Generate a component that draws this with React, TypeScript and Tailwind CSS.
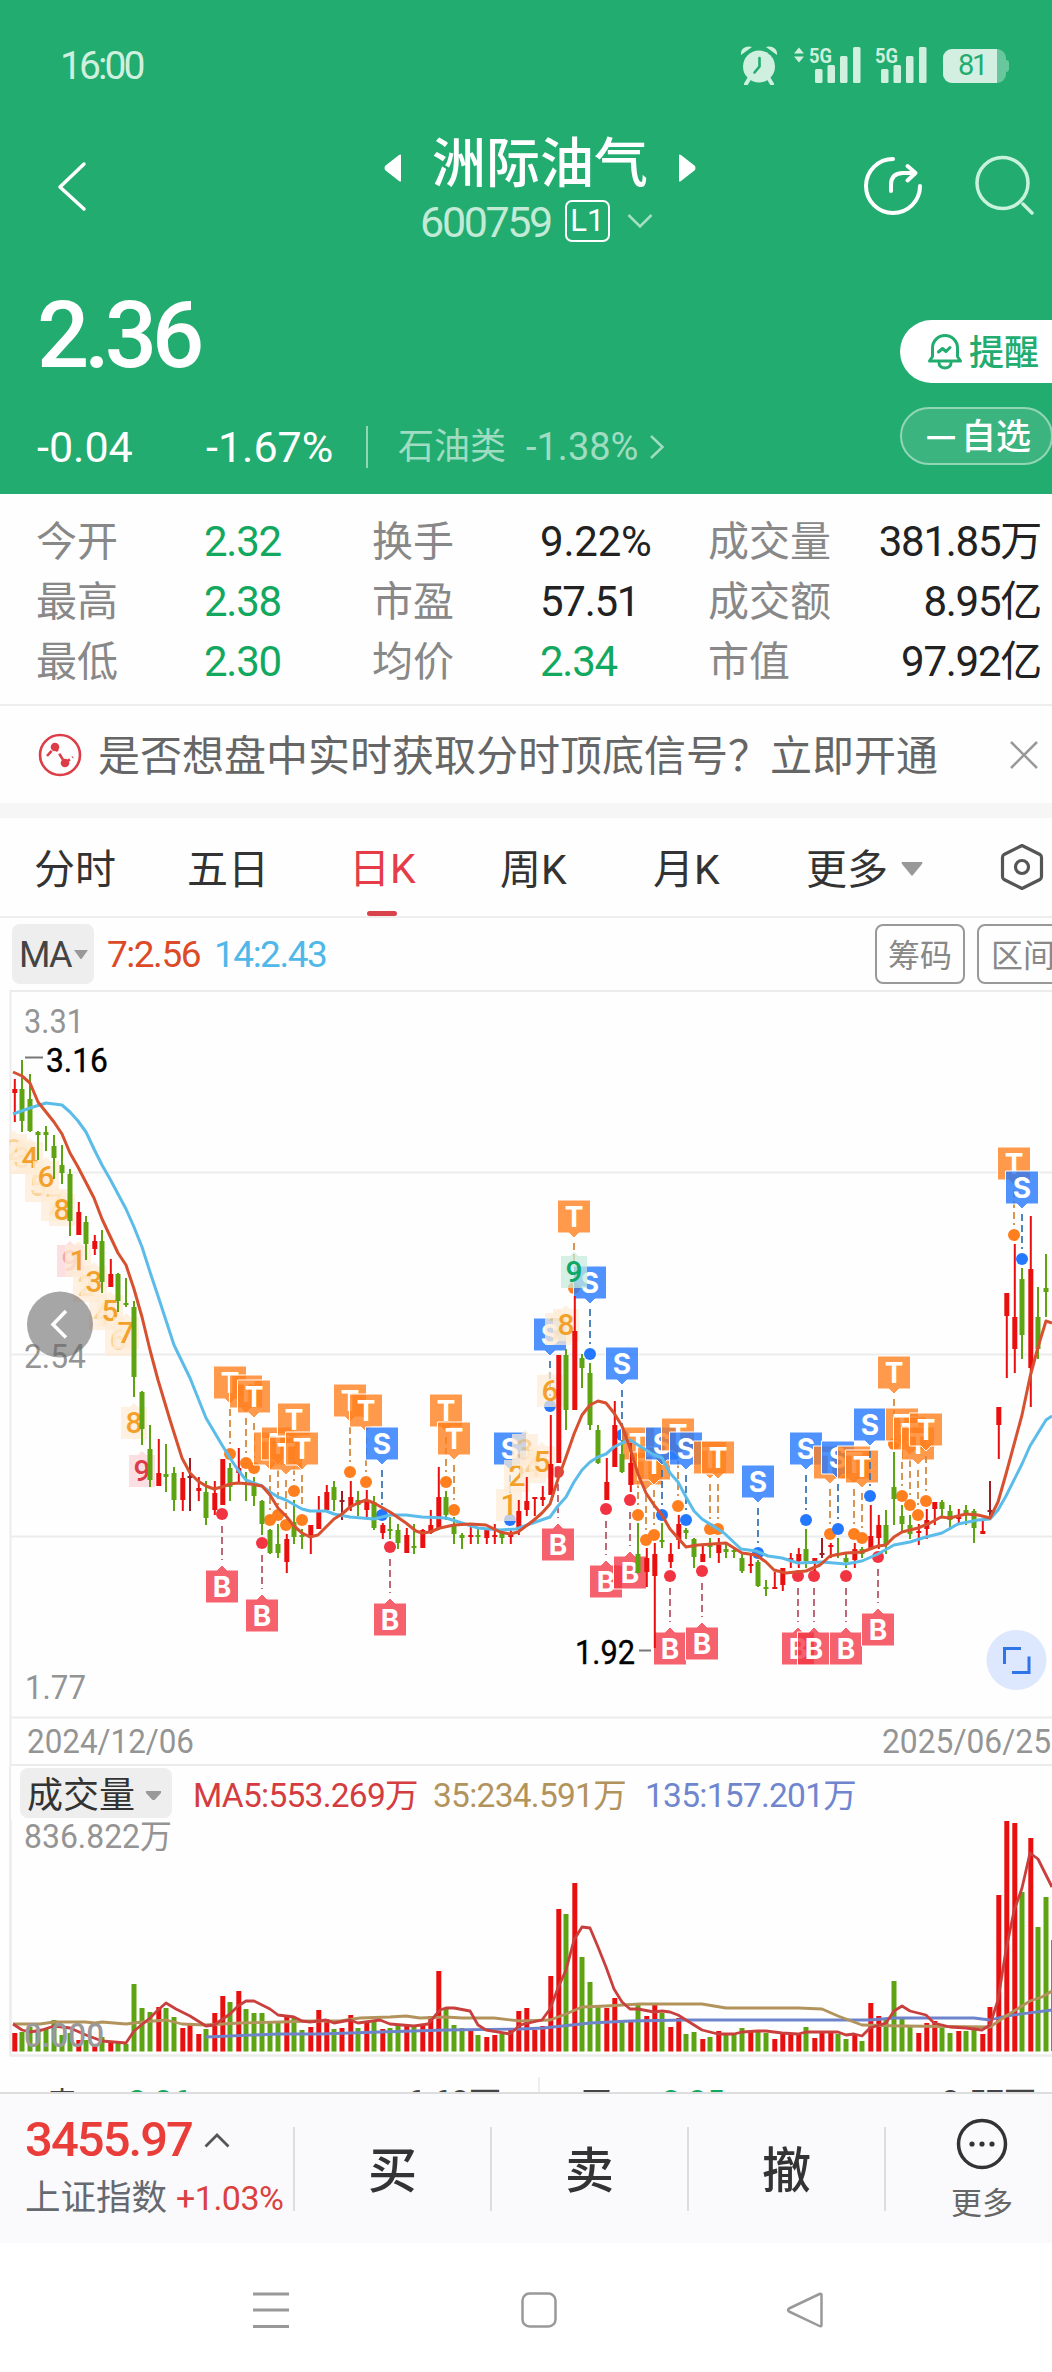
import { clsx } from 'clsx';

type Kind = 'R' | 'G' | 'D';
// kind, high, low, body top, body bottom, volume top
type Candle = [Kind, number, number, number, number, number];

const CANDLES: Candle[] = [
  ['R', 1079, 1122, 1089, 1093, 2033], ['G', 1060, 1132, 1089, 1121, 2032], ['G', 1074, 1132, 1099, 1131, 2027],
  ['G', 1131, 1160, 1132, 1135, 2030], ['G', 1126, 1151, 1132, 1135, 2028], ['G', 1135, 1179, 1146, 1158, 2020],
  ['G', 1145, 1184, 1165, 1173, 2035], ['G', 1169, 1236, 1174, 1221, 2033], ['R', 1202, 1235, 1212, 1235, 2040],
  ['G', 1216, 1260, 1222, 1244, 2040], ['R', 1235, 1255, 1241, 1249, 2045], ['G', 1230, 1293, 1241, 1282, 2037],
  ['R', 1259, 1287, 1274, 1287, 2043], ['G', 1273, 1312, 1274, 1301, 2043], ['G', 1278, 1307, 1303, 1305, 2044],
  ['G', 1301, 1397, 1307, 1377, 1984], ['G', 1391, 1445, 1392, 1429, 2008], ['G', 1425, 1487, 1449, 1480, 2012],
  ['R', 1439, 1486, 1473, 1486, 2007], ['G', 1444, 1492, 1474, 1477, 2008], ['G', 1467, 1511, 1473, 1500, 2017],
  ['R', 1472, 1511, 1478, 1500, 2028], ['D', 1458, 1511, 1476, 1478, 2024], ['R', 1477, 1501, 1488, 1491, 2034],
  ['G', 1481, 1525, 1492, 1518, 2029], ['R', 1481, 1515, 1493, 1510, 2013], ['R', 1459, 1505, 1459, 1505, 1996],
  ['G', 1463, 1501, 1468, 1487, 2002], ['R', 1448, 1482, 1468, 1473, 1991], ['G', 1472, 1501, 1483, 1485, 2009],
  ['G', 1477, 1506, 1486, 1496, 2013], ['G', 1500, 1535, 1501, 1524, 2013], ['G', 1529, 1554, 1530, 1553, 2022],
  ['G', 1524, 1558, 1544, 1553, 2021], ['R', 1534, 1573, 1539, 1562, 2016], ['G', 1500, 1544, 1522, 1537, 2018],
  ['G', 1529, 1549, 1535, 1537, 2030], ['R', 1525, 1554, 1525, 1535, 2027], ['R', 1496, 1529, 1512, 1529, 2010],
  ['R', 1485, 1510, 1492, 1510, 2019], ['G', 1481, 1511, 1487, 1500, 2029], ['D', 1491, 1520, 1500, 1502, 2028],
  ['R', 1481, 1511, 1497, 1507, 2015], ['G', 1491, 1516, 1500, 1505, 2028], ['R', 1490, 1517, 1500, 1510, 2022],
  ['G', 1496, 1530, 1502, 1528, 2021], ['R', 1523, 1539, 1525, 1533, 2029], ['G', 1517, 1539, 1529, 1530, 2028],
  ['G', 1524, 1549, 1530, 1543, 2025], ['R', 1528, 1553, 1535, 1553, 2025], ['G', 1524, 1554, 1546, 1548, 2027],
  ['R', 1529, 1548, 1530, 1548, 2024], ['R', 1510, 1534, 1525, 1533, 2016], ['R', 1467, 1528, 1497, 1528, 1971],
  ['G', 1491, 1520, 1497, 1515, 2008], ['G', 1517, 1544, 1524, 1534, 2025], ['G', 1533, 1549, 1535, 1538, 2028],
  ['R', 1524, 1544, 1535, 1537, 2031], ['G', 1528, 1544, 1535, 1537, 2035], ['R', 1528, 1544, 1530, 1538, 2037],
  ['R', 1524, 1544, 1535, 1537, 2035], ['G', 1530, 1544, 1533, 1538, 2034], ['R', 1530, 1544, 1535, 1537, 2030],
  ['R', 1500, 1535, 1511, 1528, 2011], ['R', 1477, 1516, 1501, 1510, 2008], ['R', 1497, 1516, 1497, 1499, 2030],
  ['R', 1486, 1506, 1497, 1500, 2026], ['R', 1415, 1495, 1464, 1495, 1976], ['R', 1355, 1463, 1355, 1463, 1909],
  ['G', 1349, 1430, 1355, 1410, 1914], ['R', 1296, 1410, 1331, 1410, 1883], ['G', 1354, 1388, 1358, 1368, 1957],
  ['G', 1363, 1430, 1373, 1425, 1982], ['G', 1425, 1464, 1430, 1463, 2005], ['R', 1458, 1500, 1482, 1500, 2008],
  ['R', 1401, 1467, 1425, 1467, 1998], ['G', 1440, 1473, 1454, 1472, 2022], ['R', 1443, 1492, 1463, 1485, 2022],
  ['G', 1523, 1573, 1554, 1573, 2003], ['R', 1548, 1587, 1558, 1572, 2016], ['R', 1543, 1648, 1554, 1576, 2005],
  ['G', 1523, 1548, 1540, 1542, 2013], ['R', 1543, 1568, 1554, 1562, 2027], ['R', 1515, 1549, 1524, 1540, 2018],
  ['G', 1528, 1539, 1530, 1533, 2034], ['G', 1538, 1568, 1539, 1557, 2032], ['R', 1544, 1562, 1554, 1562, 2039],
  ['G', 1538, 1558, 1544, 1547, 2037], ['R', 1538, 1563, 1545, 1553, 2031], ['G', 1543, 1558, 1549, 1552, 2034],
  ['G', 1547, 1558, 1550, 1552, 2034], ['G', 1554, 1573, 1558, 1571, 2028], ['R', 1554, 1573, 1564, 1566, 2032],
  ['G', 1560, 1587, 1562, 1586, 2030], ['G', 1580, 1596, 1587, 1589, 2033], ['R', 1572, 1589, 1587, 1589, 2039],
  ['R', 1568, 1591, 1568, 1585, 2034], ['R', 1553, 1568, 1558, 1559, 2033], ['R', 1548, 1568, 1554, 1561, 2034],
  ['G', 1529, 1568, 1549, 1561, 2027], ['R', 1558, 1571, 1558, 1562, 2038], ['D', 1538, 1558, 1553, 1555, 2033],
  ['R', 1543, 1558, 1545, 1547, 2033], ['G', 1538, 1558, 1553, 1555, 2034], ['G', 1553, 1568, 1558, 1562, 2039],
  ['R', 1543, 1568, 1549, 1560, 2034], ['G', 1547, 1558, 1549, 1554, 2041], ['R', 1505, 1549, 1536, 1549, 2003],
  ['R', 1515, 1549, 1525, 1538, 2016], ['G', 1510, 1554, 1525, 1545, 2018], ['G', 1452, 1525, 1487, 1499, 1981],
  ['G', 1505, 1531, 1516, 1524, 2019], ['G', 1515, 1539, 1525, 1534, 2026], ['R', 1524, 1545, 1531, 1533, 2033],
  ['R', 1509, 1539, 1520, 1529, 2023], ['R', 1502, 1525, 1502, 1509, 2021], ['G', 1500, 1516, 1502, 1509, 2028],
  ['G', 1505, 1530, 1511, 1520, 2033], ['R', 1509, 1525, 1517, 1519, 2031], ['G', 1505, 1525, 1510, 1515, 2031],
  ['G', 1509, 1543, 1511, 1528, 2027], ['R', 1521, 1534, 1531, 1534, 2034], ['D', 1481, 1520, 1510, 1512, 2007],
  ['R', 1407, 1459, 1407, 1425, 1895], ['R', 1293, 1378, 1293, 1316, 1821], ['R', 1244, 1373, 1317, 1349, 1823],
  ['G', 1268, 1359, 1279, 1335, 1892], ['R', 1216, 1407, 1269, 1368, 1838], ['G', 1287, 1359, 1317, 1349, 1927],
  ['G', 1254, 1317, 1288, 1292, 1897],
];

const MA7 =
  '13,1072 22,1076 30,1083 38,1102 54,1122 62,1134 70,1153 78,1167 94,1198 102,1219 118,1253 126,1265 134,1289 142,1317 150,1350 158,1380 170,1420 182,1458 190,1473 198,1481 206,1486 214,1489 222,1487 230,1484 238,1483 250,1484 262,1486 270,1495 278,1508 286,1516 294,1526 302,1533 310,1537 318,1535 326,1527 334,1519 342,1514 350,1507 358,1503 366,1500 374,1503 390,1512 406,1523 416,1531 422,1533 430,1532 440,1528 454,1525 470,1524 486,1525 500,1532 510,1534 518,1532 526,1526 534,1520 542,1513 550,1504 558,1479 566,1457 574,1434 582,1415 590,1405 598,1401 606,1403 614,1413 622,1426 630,1448 638,1474 646,1493 654,1505 662,1515 670,1529 678,1538 686,1547 698,1545 726,1543 742,1553 756,1555 766,1562 774,1570 786,1573 806,1571 820,1565 830,1556 846,1553 862,1552 878,1546 886,1545 894,1537 902,1532 918,1528 930,1523 941,1517 950,1518 958,1516 966,1514 978,1515 990,1518 998,1502 1006,1474 1022,1415 1030,1377 1038,1347 1046,1321 1052,1323';
const MA14 =
  '13,1114 30,1108 46,1103 62,1105 70,1112 78,1121 86,1132 94,1149 102,1165 110,1179 118,1194 126,1209 134,1227 142,1247 150,1272 158,1296 174,1345 190,1378 206,1418 222,1445 230,1458 238,1470 246,1480 262,1486 270,1492 278,1497 286,1500 302,1509 310,1511 326,1511 334,1514 350,1517 374,1519 390,1515 406,1515 422,1517 446,1518 462,1523 478,1528 500,1530 516,1529 530,1524 550,1517 558,1506 566,1497 574,1482 582,1470 590,1462 598,1457 606,1454 614,1447 622,1443 630,1440 638,1445 646,1450 654,1455 662,1458 670,1473 678,1482 686,1497 694,1511 702,1519 724,1533 741,1549 756,1551 768,1556 782,1558 798,1563 822,1562 846,1564 862,1561 878,1554 894,1545 910,1542 926,1537 942,1533 958,1524 978,1520 990,1519 998,1510 1006,1496 1022,1464 1030,1446 1046,1420 1052,1416';

const VOL5 =
  '13,2024 22,2030 30,2032 42,2030 54,2026 70,2028 86,2035 102,2041 126,2043 134,2031 150,2018 158,2010 166,2003 176,2009 190,2016 206,2026 214,2025 230,2014 238,2006 246,2001 254,2001 270,2009 278,2015 294,2017 302,2021 310,2022 326,2020 334,2023 350,2020 358,2023 380,2020 390,2024 414,2026 428,2024 440,2010 446,2008 454,2008 470,2011 478,2025 486,2030 510,2034 520,2025 542,2020 550,2009 558,1988 566,1970 574,1940 582,1927 590,1928 598,1947 606,1967 614,1989 622,2002 630,2009 638,2009 654,2012 662,2011 670,2012 678,2015 686,2020 702,2030 718,2034 734,2034 742,2032 758,2031 766,2031 782,2033 798,2034 806,2032 838,2032 846,2035 854,2034 862,2036 870,2028 886,2023 894,2011 902,2006 910,2011 926,2015 934,2023 950,2027 966,2028 982,2030 990,2025 998,2000 1006,1950 1014,1911 1022,1888 1030,1853 1038,1859 1046,1875 1052,1887';
const VOL35 =
  '13,2024 40,2024 54,2022 85,2022 95,2023 102,2022 126,2024 142,2022 166,2020 182,2024 205,2025 240,2023 280,2022 310,2021 340,2021 360,2018 390,2017 406,2016 420,2018 446,2017 462,2018 494,2018 520,2021 550,2020 566,2014 582,2007 606,2006 640,2004 702,2004 726,2008 798,2008 822,2009 838,2016 862,2025 902,2026 990,2027 1006,2016 1030,2001 1042,1997 1052,1991';
const VOL135 =
  '206,2037 278,2034 320,2034 380,2032 446,2030 520,2029 544,2028 590,2023 630,2021 686,2020 870,2020 894,2018 974,2018 990,2020 1006,2016 1052,2010';

// letter, x, top of the flag
const FLAGS: ['T' | 'S', number, number][] = [
  ['T', 230, 1366], ['T', 246, 1375], ['T', 254, 1380],
  ['T', 270, 1432], ['T', 278, 1427], ['T', 294, 1403], ['T', 286, 1437], ['T', 302, 1432],
  ['T', 350, 1384], ['T', 366, 1394], ['S', 382, 1427], ['T', 446, 1394], ['T', 454, 1422],
  ['S', 510, 1432], ['S', 550, 1318], ['T', 574, 1200], ['S', 590, 1266], ['S', 622, 1347],
  ['T', 638, 1427], ['T', 646, 1452], ['T', 654, 1447], ['S', 662, 1427], ['T', 678, 1418], ['S', 686, 1432],
  ['T', 710, 1441], ['T', 718, 1441], ['S', 758, 1465], ['S', 806, 1432], ['T', 830, 1446], ['S', 838, 1441],
  ['T', 854, 1446], ['T', 862, 1450], ['S', 870, 1408], ['T', 894, 1356], ['T', 902, 1408],
  ['T', 910, 1417], ['T', 918, 1427], ['T', 926, 1413], ['T', 1014, 1147], ['S', 1022, 1171],
];

const BUYS: [number, number][] = [
  [222, 1514], [262, 1543], [390, 1547], [558, 1472], [606, 1509], [630, 1500], [670, 1576], [702, 1571],
  [798, 1576], [814, 1576], [846, 1576], [878, 1557],
];

// digit, x, y of the middle, style
const COUNTS: [string, number, number, 'on' | 'dim' | 'red' | 'green'][] = [
  ['2', 14, 1149, 'dim'], ['3', 22, 1157, 'dim'], ['4', 30, 1157, 'on'], ['5', 38, 1185, 'dim'], ['6', 46, 1176, 'on'],
  ['7', 54, 1204, 'dim'], ['8', 62, 1209, 'on'], ['9', 70, 1260, 'red'], ['1', 78, 1260, 'on'], ['2', 86, 1285, 'dim'],
  ['3', 94, 1281, 'on'], ['4', 102, 1313, 'dim'], ['5', 110, 1310, 'on'], ['6', 118, 1339, 'dim'], ['7', 126, 1332, 'on'],
  ['8', 134, 1422, 'on'], ['9', 142, 1470, 'red'], ['1', 509, 1504, 'on'], ['2', 517, 1475, 'on'], ['3', 525, 1449, 'dim'],
  ['4', 533, 1466, 'dim'], ['5', 542, 1461, 'on'], ['6', 550, 1390, 'on'], ['7', 558, 1328, 'dim'], ['8', 566, 1324, 'on'],
  ['9', 574, 1271, 'green'],
];

const QUOTES = [
  ['今开', '2.32', true, '换手', '9.22%', false, '成交量', '381.85万'],
  ['最高', '2.38', true, '市盈', '57.51', false, '成交额', '8.95亿'],
  ['最低', '2.30', true, '均价', '2.34', true, '市值', '97.92亿'],
] as const;

const COLORS: Record<Kind, string> = { R: '#e90f0f', G: '#5ea312', D: '#9c1f26' };
const candleX = (i: number, kind: Kind) => 14 + i * 8 + (kind === 'R' ? 0.8 : 0);

function Flag({ letter, x, y }: { letter: 'T' | 'S'; x: number; y: number }) {
  const fill = letter === 'T' ? '#ff7f1f' : '#2478ff';
  const dash = letter === 'T' ? '#d5893f' : '#3b78b8';
  return (
    <g>
      <line x1={x} x2={x} y1={y + 43} y2={y + 78} stroke={dash} strokeWidth="1.8" strokeDasharray="7 4" />
      <circle cx={x} cy={y + 88} r="6" fill={fill} />
      <path
        d={`M${x - 16.5} ${y}h33v33h-11.5l-5 5-5-5h-11.5z`}
        fill={fill}
        fillOpacity="0.8"
        stroke="#fff"
        strokeWidth="1"
      />
      <text x={x} y={y + 26.5} textAnchor="middle" fill="#fff" className="font-bold text-[28px]">
        {letter}
      </text>
    </g>
  );
}

function Buy({ x, y }: { x: number; y: number }) {
  return (
    <g>
      <circle cx={x} cy={y} r="6" fill="#f23442" />
      <line x1={x} x2={x} y1={y + 12} y2={y + 46} stroke="#b9586a" strokeWidth="1.8" strokeDasharray="7 4" />
      <path
        d={`M${x - 16.5} ${y + 56}h11.5l5-5 5 5h11.5v33h-33z`}
        fill="#f23442"
        fillOpacity="0.78"
        stroke="#fff"
        strokeWidth="1"
      />
      <text x={x} y={y + 82.5} textAnchor="middle" fill="#fff" className="font-bold text-[28px]">
        B
      </text>
    </g>
  );
}

function Count({ digit, x, y, tone }: { digit: string; x: number; y: number; tone: string }) {
  const box = tone === 'red' ? '#fbd3d8' : tone === 'green' ? '#c5ecdc' : '#fdebd6';
  const ink = tone === 'red' ? (x < 100 ? '#f3a9a6' : '#dc3c47') : tone === 'green' ? '#0fa765' : '#f3a12a';
  return (
    <g>
      <path d={`M${x - 13} ${y - 15}h9l4-4 4 4h9v32h-26z`} fill={box} fillOpacity="0.72" />
      <text
        x={x}
        y={y + 11}
        textAnchor="middle"
        fill={ink}
        fillOpacity={tone === 'dim' ? 0.4 : 1}
        className="font-[Roboto] font-medium text-[30px]"
      >
        {digit}
      </text>
    </g>
  );
}

function Bars5G({ arrows = false }: { arrows?: boolean }) {
  return (
    <svg width={arrows ? 68 : 52} height="38" viewBox={arrows ? '-16 0 68 38' : '0 0 52 38'} fill="currentColor">
      {arrows && <path d="M-15 7.500l5-6 5 6zM-15 10.500l5 6 5-6z" />}
      <text x="0" y="16.500" textLength="23" lengthAdjust="spacingAndGlyphs" className="font-[Roboto] text-[21px] font-bold">
        5G
      </text>
      <rect x="6" y="23" width="7.500" height="14" rx="1.500" />
      <rect x="18.500" y="19" width="7.500" height="18" rx="1.500" />
      <rect x="31" y="10" width="7.500" height="27" rx="1.500" />
      <rect x="44" y="1" width="7.500" height="36" rx="1.500" />
    </svg>
  );
}

function StatusBar() {
  return (
    <div className="flex h-[130px] items-center justify-between pr-[43px] pl-[60px] text-[#cff0df]">
      <span className="pt-[2px] text-[39px] tracking-[-0.075em]">16:00</span>
      <div className="flex items-center">
        <svg width="38" height="40" viewBox="0 0 38 40" fill="currentColor">
          <circle cx="19" cy="21.500" r="16" />
          <path d="M1 10C0 4 6 0 12 2zM37 10c1-6-5-10-11-8z" />
          <path d="M9 34l-3 5M29 34l3 5" stroke="currentColor" strokeWidth="4" strokeLinecap="round" />
          <path d="M19.500 13v8.500l-5 6" stroke="#22ac6f" strokeWidth="2.600" fill="none" strokeLinecap="round" />
        </svg>
        <div className="ml-[15px]">
          <Bars5G arrows />
        </div>
        <div className="ml-[14px]">
          <Bars5G />
        </div>
        <div className="ml-[16px] flex items-center pt-[2px]">
          <div className="flex h-[34px] w-[63px] overflow-hidden rounded-[9px] bg-[#68c79c]">
            <div className="flex w-[54px] items-center justify-center bg-[#d3efe1] pl-[4px] text-[29px] tracking-[-0.08em] text-[#22ac6f]">
              81
            </div>
          </div>
          <div className="h-3 w-[3px] rounded-r bg-[#68c79c]" />
        </div>
      </div>
    </div>
  );
}

function TitleBar() {
  return (
    <div className="flex h-[112px] items-center pl-[56px]">
      <svg width="32" height="52" viewBox="0 0 32 52" fill="none" stroke="#fff" strokeWidth="3.500" strokeLinecap="round" strokeLinejoin="round">
        <path d="M28 4L4 27l24 22" />
      </svg>
      <div className="ml-[294px] flex w-[316px] flex-col items-center pt-[8px]">
        <div className="flex h-[62px] items-center">
          <svg className="mt-[6px]" width="19" height="28" viewBox="0 0 19 28" fill="#fff">
            <path d="M17 1v26q0 1-2 0L1 16q-1-2 0-4L15 1q2-1 2 0z" />
          </svg>
          <span className="mx-[29px] text-[54px] leading-[62px] font-medium whitespace-nowrap">洲际油气</span>
          <svg className="mt-[6px]" width="19" height="28" viewBox="0 0 19 28" fill="#fff">
            <path d="M2 1v26q0 1 2 0l14-11q1-2 0-4L4 1Q2 0 2 1z" />
          </svg>
        </div>
        <div className="mr-[7px] flex h-[50px] items-center">
          <span className="pt-[2px] text-[43px] leading-[50px] tracking-[-0.055em] text-[#c3ead7]">600759</span>
          <span className="ml-[14px] flex h-[42px] w-[45px] items-center justify-center rounded-[7px] border-2 border-white text-[31px]">
            L1
          </span>
          <svg className="ml-[17px]" width="26" height="16" viewBox="0 0 26 16" fill="none" stroke="#a5dfc5" strokeWidth="2.500">
            <path d="M1.500 2L13 13.500 24.500 2" />
          </svg>
        </div>
      </div>
      <svg className="ml-[163px]" width="62" height="62" viewBox="0 0 62 62" fill="none" stroke="#fff" strokeWidth="4" strokeLinecap="round" strokeLinejoin="round">
        <path d="M32 4a27 27 0 1 0 27 27" />
        <path d="M30 36v-6q0-12 12-12h12M46.500 11l8 7-8 7.500" />
      </svg>
      <svg className="ml-[50px] -mt-1" width="62" height="62" viewBox="0 0 62 62" fill="none" stroke="#c9f2dd" strokeWidth="3.500" strokeLinecap="round">
        <circle cx="29.500" cy="30" r="25.500" />
        <path d="M50 51l9 9" />
      </svg>
    </div>
  );
}

function Header() {
  return (
    <header className="h-[494px] overflow-hidden bg-[#22ac6f] text-white">
      <StatusBar />
      <TitleBar />
      <div className="flex justify-between">
        <div className="pt-[44px] pl-[37px]">
          <div className="text-[92px] leading-[100px] font-medium tracking-[-0.055em]">2.36</div>
          <div className="mt-[31px] flex h-[60px] items-center text-[43px]">
            <span className="w-[169px]">-0.04</span>
            <span className="w-[160px]">-1.67%</span>
            <span className="mr-[30px] h-[42px] w-[2px] bg-white/50" />
            <span className="mr-[20px] text-[36px] text-[#a0dcc1]">石油类</span>
            <span className="text-[38px] text-[#a0dcc1]">-1.38%</span>
            <svg className="ml-[11px]" width="16" height="26" viewBox="0 0 16 26" fill="none" stroke="#a0dcc1" strokeWidth="2.500">
              <path d="M2 2l11.500 11L2 24" />
            </svg>
          </div>
        </div>
        <div className="-mr-2 flex w-[160px] flex-col pt-[78px]">
          <div className="flex h-[63px] items-center rounded-l-full bg-white pl-[27px] text-[#22ac6f]">
            <svg width="36" height="38" viewBox="0 0 36 38" fill="none" stroke="currentColor" strokeWidth="3" strokeLinejoin="round" strokeLinecap="round">
              <path d="M2.500 28h31l-3-4.500V15a12.500 12.500 0 0 0-25 0v8.500z" />
              <path d="M12 30a6 5 0 0 0 12 0" />
              <path d="M11.500 19l4-3.500 3.500 3 4-4" />
            </svg>
            <span className="ml-[6px] pt-[5px] text-[35px] font-medium whitespace-nowrap">提醒</span>
          </div>
          <div className="mt-[24px] flex h-[58px] w-[153px] items-center rounded-full border-2 border-[#90d6b7] bg-[#3bb47f] pt-[4px] pl-[24px]">
            <span className="text-[30px] font-medium">一</span>
            <span className="ml-[5px] text-[35px] font-medium whitespace-nowrap">自选</span>
          </div>
        </div>
      </div>
    </header>
  );
}

function Quotes() {
  return (
    <section className="h-[212px] border-b-2 border-[#eee] pt-[17px] pr-[11px] pl-[36px] text-[42px]">
      {QUOTES.map(([a, av, , b, bv, bUp, c, cv]) => (
        <div key={a} className="flex h-[60px] items-center whitespace-nowrap text-[#222]">
          <span className="w-[168px] pt-[3px] text-[#888] text-[41px]">{a}</span>
          <span className="w-[168px] tracking-[-0.03em] text-[#12a860]">{av}</span>
          <span className="w-[168px] pt-[3px] text-[#888] text-[41px]">{b}</span>
          <span className={clsx('w-[168px]', bv.endsWith('%') ? 'tracking-[-0.005em]' : 'tracking-[-0.03em]', bUp && 'text-[#12a860]')}>
            {bv}
          </span>
          <span className="pt-[3px] text-[#888] text-[41px]">{c}</span>
          <span className="ml-auto tracking-[-0.03em]">{cv}</span>
        </div>
      ))}
    </section>
  );
}

function Notice() {
  return (
    <section className="flex h-[97px] items-center pl-[38px]">
      <svg width="44" height="44" viewBox="0 0 44 44" fill="none" stroke="#dd3d47" strokeWidth="2.600">
        <circle cx="22" cy="22" r="20" />
        <path d="M9 23l8-9 10 16 8-6" strokeDasharray="7 3" />
        <circle cx="17" cy="14" r="3" fill="#dd3d47" />
        <circle cx="27" cy="30" r="3" fill="#dd3d47" />
      </svg>
      <span className="ml-[16px] pt-[4px] text-[42px] whitespace-nowrap text-[#666]">是否想盘中实时获取分时顶底信号？立即开通</span>
      <svg className="ml-[72px]" width="28" height="28" viewBox="0 0 28 28" stroke="#999" strokeWidth="2.500">
        <path d="M1 1l26 26M27 1L1 27" />
      </svg>
    </section>
  );
}

function Tabs() {
  return (
    <nav className="flex h-[100px] items-center border-b-2 border-[#eee] pl-[34px] text-[41px] whitespace-nowrap text-[#333]">
      <span className="w-[153px] pt-[7px]">分时</span>
      <span className="w-[162px] pt-[7px]">五日</span>
      <div className="flex h-full w-[151px] flex-col text-[#e63c48]">
        <span className="flex flex-1 items-center pt-[11px]">日K</span>
        <span className="ml-[18px] h-[5px] w-[30px] rounded bg-[#d8434c]" />
      </div>
      <span className="w-[153px] pt-[7px]">周K</span>
      <span className="w-[153px] pt-[7px]">月K</span>
      <span className="pt-[7px]">更多</span>
      <svg className="mt-[3px] ml-[13px]" width="22" height="14" viewBox="0 0 22 14" fill="#999">
        <path d="M1 0h20q1 1 0 2L12 13q-1 1-2 0L1 2Q0 1 1 0z" />
      </svg>
      <svg className="ml-[77px] shrink-0" width="44" height="48" viewBox="0 0 44 48" fill="none" stroke="#555" strokeWidth="3.200" strokeLinejoin="round">
        <path d="M22 2.500l18 9q1.500 1 1.500 3v19q0 2-1.500 3l-18 9-18-9q-1.500-1-1.500-3v-19q0-2 1.500-3z" />
        <circle cx="22" cy="24" r="6.500" />
      </svg>
    </nav>
  );
}

function Indicators() {
  return (
    <div className="flex h-[72px] items-center overflow-hidden pl-[12px] text-[37px] whitespace-nowrap">
      <span className="flex h-[60px] w-[82px] items-center rounded-lg bg-[#eee] pt-[2px] pl-[7px] text-[36px] tracking-[-0.05em] text-[#444]">
        MA
        <svg className="ml-[3px]" width="14" height="10" viewBox="0 0 14 10" fill="#999">
          <path d="M0 0h14L7.500 9h-1z" />
        </svg>
      </span>
      <span className="ml-[13px] w-[107px] pt-[2px] tracking-[-0.04em] text-[#dc4a28]">7:2.56</span>
      <span className="pt-[2px] tracking-[-0.04em] text-[#4fb8e9]">14:2.43</span>
      <span className="ml-auto flex h-[60px] w-[90px] shrink-0 items-center justify-center rounded-lg border-2 border-[#999] pt-[4px] text-[32px] text-[#888]">
        筹码
      </span>
      <span className="-mr-[17px] ml-[12px] flex h-[60px] w-[92px] shrink-0 items-center justify-center rounded-lg border-2 border-[#999] pt-[4px] text-[32px] text-[#888]">
        区间
      </span>
    </div>
  );
}

function KLine() {
  return (
    <svg className="block font-[Inter]" width="1052" height="776" viewBox="0 990 1052 776">
      <clipPath id="plot">
        <rect x="9" y="990" width="1043" height="776" />
      </clipPath>
      <g stroke="#ececec" strokeWidth="2">
        <path d="M10 991H1052M10 1172.500H1052M10 1354.500H1052M10 1536.500H1052M10 1717.500H1052M10 1765H1052M10.500 990V1766" fill="none" />
      </g>
      <g className="font-[Roboto] text-[33.500px]" fill="#949494">
        <text x="24" y="1033" textLength="60" lengthAdjust="spacingAndGlyphs">3.31</text>
        <text x="24" y="1368" textLength="62" lengthAdjust="spacingAndGlyphs">2.54</text>
        <text x="25" y="1699" textLength="61" lengthAdjust="spacingAndGlyphs">1.77</text>
        <text x="27" y="1753" textLength="167" lengthAdjust="spacingAndGlyphs">2024/12/06</text>
        <text x="882" y="1753" textLength="169" lengthAdjust="spacingAndGlyphs">2025/06/25</text>
      </g>
      {FLAGS.map(([letter, x, y]) => (
        <Flag key={`${letter}${x}`} letter={letter} x={x} y={y} />
      ))}
      {BUYS.map(([x, y]) => (
        <Buy key={x} x={x} y={y} />
      ))}
      <g clipPath="url(#plot)">
        {COUNTS.map(([digit, x, y, tone]) => (
          <Count key={x} digit={digit} x={x} y={y} tone={tone} />
        ))}
      </g>
      {CANDLES.map(([kind, high, low, top, bottom], i) => (
        <g key={i} fill={COLORS[kind]}>
          <rect x={candleX(i, kind) - 1} y={high} width="2" height={low - high} />
          <rect x={candleX(i, kind) - 2.5} y={top} width="5" height={Math.max(2, bottom - top)} />
        </g>
      ))}
      <polyline points={MA14} fill="none" stroke="#5bbce9" strokeWidth="3" strokeLinejoin="round" />
      <polyline points={MA7} fill="none" stroke="#d7502f" strokeWidth="3" strokeLinejoin="round" />
      <path d="M25 1057.500H43M639 1650.500H651" stroke="#777" strokeWidth="2" />
      <g className="font-[Roboto] text-[33.500px]" fill="#000" stroke="#000" strokeWidth="0.4">
        <text x="46" y="1072" textLength="62" lengthAdjust="spacingAndGlyphs">3.16</text>
        <text x="575" y="1664" textLength="60" lengthAdjust="spacingAndGlyphs">1.92</text>
      </g>
      <circle cx="60" cy="1324.500" r="33" fill="#666" fillOpacity="0.58" />
      <path d="M66 1311l-13 13.500 13 13" fill="none" stroke="#fff" strokeWidth="3.500" />
      <circle cx="1016.500" cy="1660" r="30" fill="#dde7fd" />
      <path d="M1004.500 1664v-15.500H1021M1012 1672.500h17v-16" fill="none" stroke="#2f74e8" strokeWidth="3" />
    </svg>
  );
}

function Volume() {
  return (
    <section>
      <div className="ml-[9px] flex h-[54px] items-center border-l-2 border-[#ececec] pl-[9px] text-[33.500px] whitespace-nowrap">
        <span className="flex h-[50px] w-[152px] items-center rounded-lg bg-[#eee] pt-[5px] pl-[7px] text-[36px] text-[#333]">
          成交量
          <svg className="ml-[11px]" width="15" height="10" viewBox="0 0 15 10" fill="#999">
            <path d="M0 0h15v2L8.500 9h-2L0 2z" />
          </svg>
        </span>
        <span className="ml-[21px] w-[240px] pt-[6px] tracking-[-0.022em] text-[#d43c3f]">MA5:553.269万</span>
        <span className="w-[212px] pt-[6px] tracking-[-0.022em] text-[#b2935c]">35:234.591万</span>
        <span className="pt-[6px] tracking-[-0.022em] text-[#6f86cf]">135:157.201万</span>
      </div>
      <svg className="block" width="1052" height="237" viewBox="0 1820 1052 237">
        <path d="M10.500 1820V2056M10 2055.500H1052" stroke="#ececec" strokeWidth="2.500" />
        <text x="24" y="1848" textLength="148" lengthAdjust="spacingAndGlyphs" fill="#949494" className="text-[33.500px]">
          836.822万
        </text>
        {CANDLES.map(([kind, , , , , top], i) => (
          <rect key={i} x={candleX(i, kind) - 2.5} y={top} width="5" height={2051.5 - top} fill={COLORS[kind === 'G' ? 'G' : 'R']} />
        ))}
        <rect x="1051" y="1940" width="1" height="111" fill="#5ea312" />
        <g fill="none" strokeWidth="2.800" strokeLinejoin="round">
          <polyline points={VOL135} stroke="#6d84cd" />
          <polyline points={VOL35} stroke="#b2935c" />
          <polyline points={VOL5} stroke="#c93f3d" />
        </g>
        <text x="24" y="2047" textLength="80" lengthAdjust="spacingAndGlyphs" fill="#999" className="text-[33.500px] font-medium">
          0.000
        </text>
      </svg>
    </section>
  );
}

function Level({ side, price, amount }: { side: string; price: string; amount: string }) {
  return (
    <>
      <span className="pt-[7px] leading-[40px]">{side}</span>
      <span className="w-[50px] pt-[5px] text-[28px] leading-[44px]">1</span>
      <span className="pt-[4px] leading-[40px] text-[#12a860]">{price}</span>
      <span className="ml-auto pt-[4px] leading-[40px]">{amount}</span>
      <span className="pt-[6px] leading-[40px]">万</span>
    </>
  );
}

function OrderBook() {
  return (
    <div className="flex h-[35px] overflow-hidden text-[32px] whitespace-nowrap text-[#444]">
      <div className="flex h-[70px] w-[538px] pt-[20px] pr-[37px] pl-[46px]">
        <Level side="卖" price="2.36" amount="6.68" />
      </div>
      <div className="mt-[20px] h-[20px] w-[2px] bg-[#eee]" />
      <div className="flex h-[70px] flex-1 pt-[20px] pr-[16px] pl-[40px]">
        <Level side="买" price="2.35" amount="2.57" />
      </div>
    </div>
  );
}

function TradeBar() {
  return (
    <footer className="flex h-[151px] items-center border-t-2 border-[#ddd] bg-[#fafafd]">
      <div className="flex h-full w-[293px] flex-col pt-[22px] pl-[25px] whitespace-nowrap">
        <div className="flex h-[48px] items-center">
          <span className="text-[49px] leading-[48px] font-medium tracking-[-0.04em] text-[#e93d39]">3455.97</span>
          <svg className="ml-[12px]" width="26" height="16" viewBox="0 0 26 16" fill="none" stroke="#555" strokeWidth="2.800">
            <path d="M1.500 14.500L13 3l11.500 11.500" />
          </svg>
        </div>
        <div className="mt-[10px] flex h-[48px] items-center">
          <span className="pt-[2px] text-[35.500px] text-[#666a70]">上证指数</span>
          <span className="ml-[9px] text-[34px] tracking-[-0.015em] text-[#da413f]">+1.03%</span>
        </div>
      </div>
      {['买', '卖', '撤'].map((label) => (
        <div key={label} className="flex h-[84px] w-[197px] items-center justify-center border-l-2 border-[#ddd] pt-[7px] text-[49px] font-medium text-[#333]">
          {label}
        </div>
      ))}
      <div className="flex h-[84px] flex-1 items-center justify-center border-l-2 border-[#ddd]">
        <div className="ml-[26px] flex flex-col items-center pt-[7px]">
          <svg width="52" height="52" viewBox="0 0 52 52" fill="none" stroke="#333" strokeWidth="3.500">
            <circle cx="26" cy="26" r="23.500" />
            <g fill="#333" stroke="none">
              <circle cx="16" cy="26" r="2.600" />
              <circle cx="26" cy="26" r="2.600" />
              <circle cx="36" cy="26" r="2.600" />
            </g>
          </svg>
          <span className="mt-[11px] text-[31px] leading-[46px] text-[#666]">更多</span>
        </div>
      </div>
    </footer>
  );
}

function SystemNav() {
  return (
    <div className="flex h-[129px] items-start bg-white pt-[46px] pl-[250px]">
      <svg width="42" height="42" viewBox="0 0 42 42" stroke="#999" strokeWidth="3">
        <path d="M3 5h36M3 21h36M3 37.500h36" />
      </svg>
      <svg className="ml-[226px]" width="42" height="42" viewBox="0 0 42 42" fill="none" stroke="#999" strokeWidth="2.500">
        <rect x="4.500" y="4.500" width="33" height="33" rx="7" />
      </svg>
      <svg className="ml-[225px]" width="42" height="42" viewBox="0 0 42 42" fill="none" stroke="#999" strokeWidth="2.500" strokeLinejoin="round">
        <path d="M36.500 6v30q0 2-2 1L4 22.500q-2-1.500 0-3L34.500 5q2-1 2 1z" />
      </svg>
    </div>
  );
}

export default function App() {
  return (
    <div className="w-[1052px] overflow-hidden bg-[#fefefe] font-[Roboto,'Noto_Sans_CJK_SC',sans-serif]">
      <Header />
      <Quotes />
      <Notice />
      <div className="h-[15px] bg-[#f6f6f6]" />
      <Tabs />
      <Indicators />
      <KLine />
      <Volume />
      <OrderBook />
      <TradeBar />
      <SystemNav />
    </div>
  );
}
